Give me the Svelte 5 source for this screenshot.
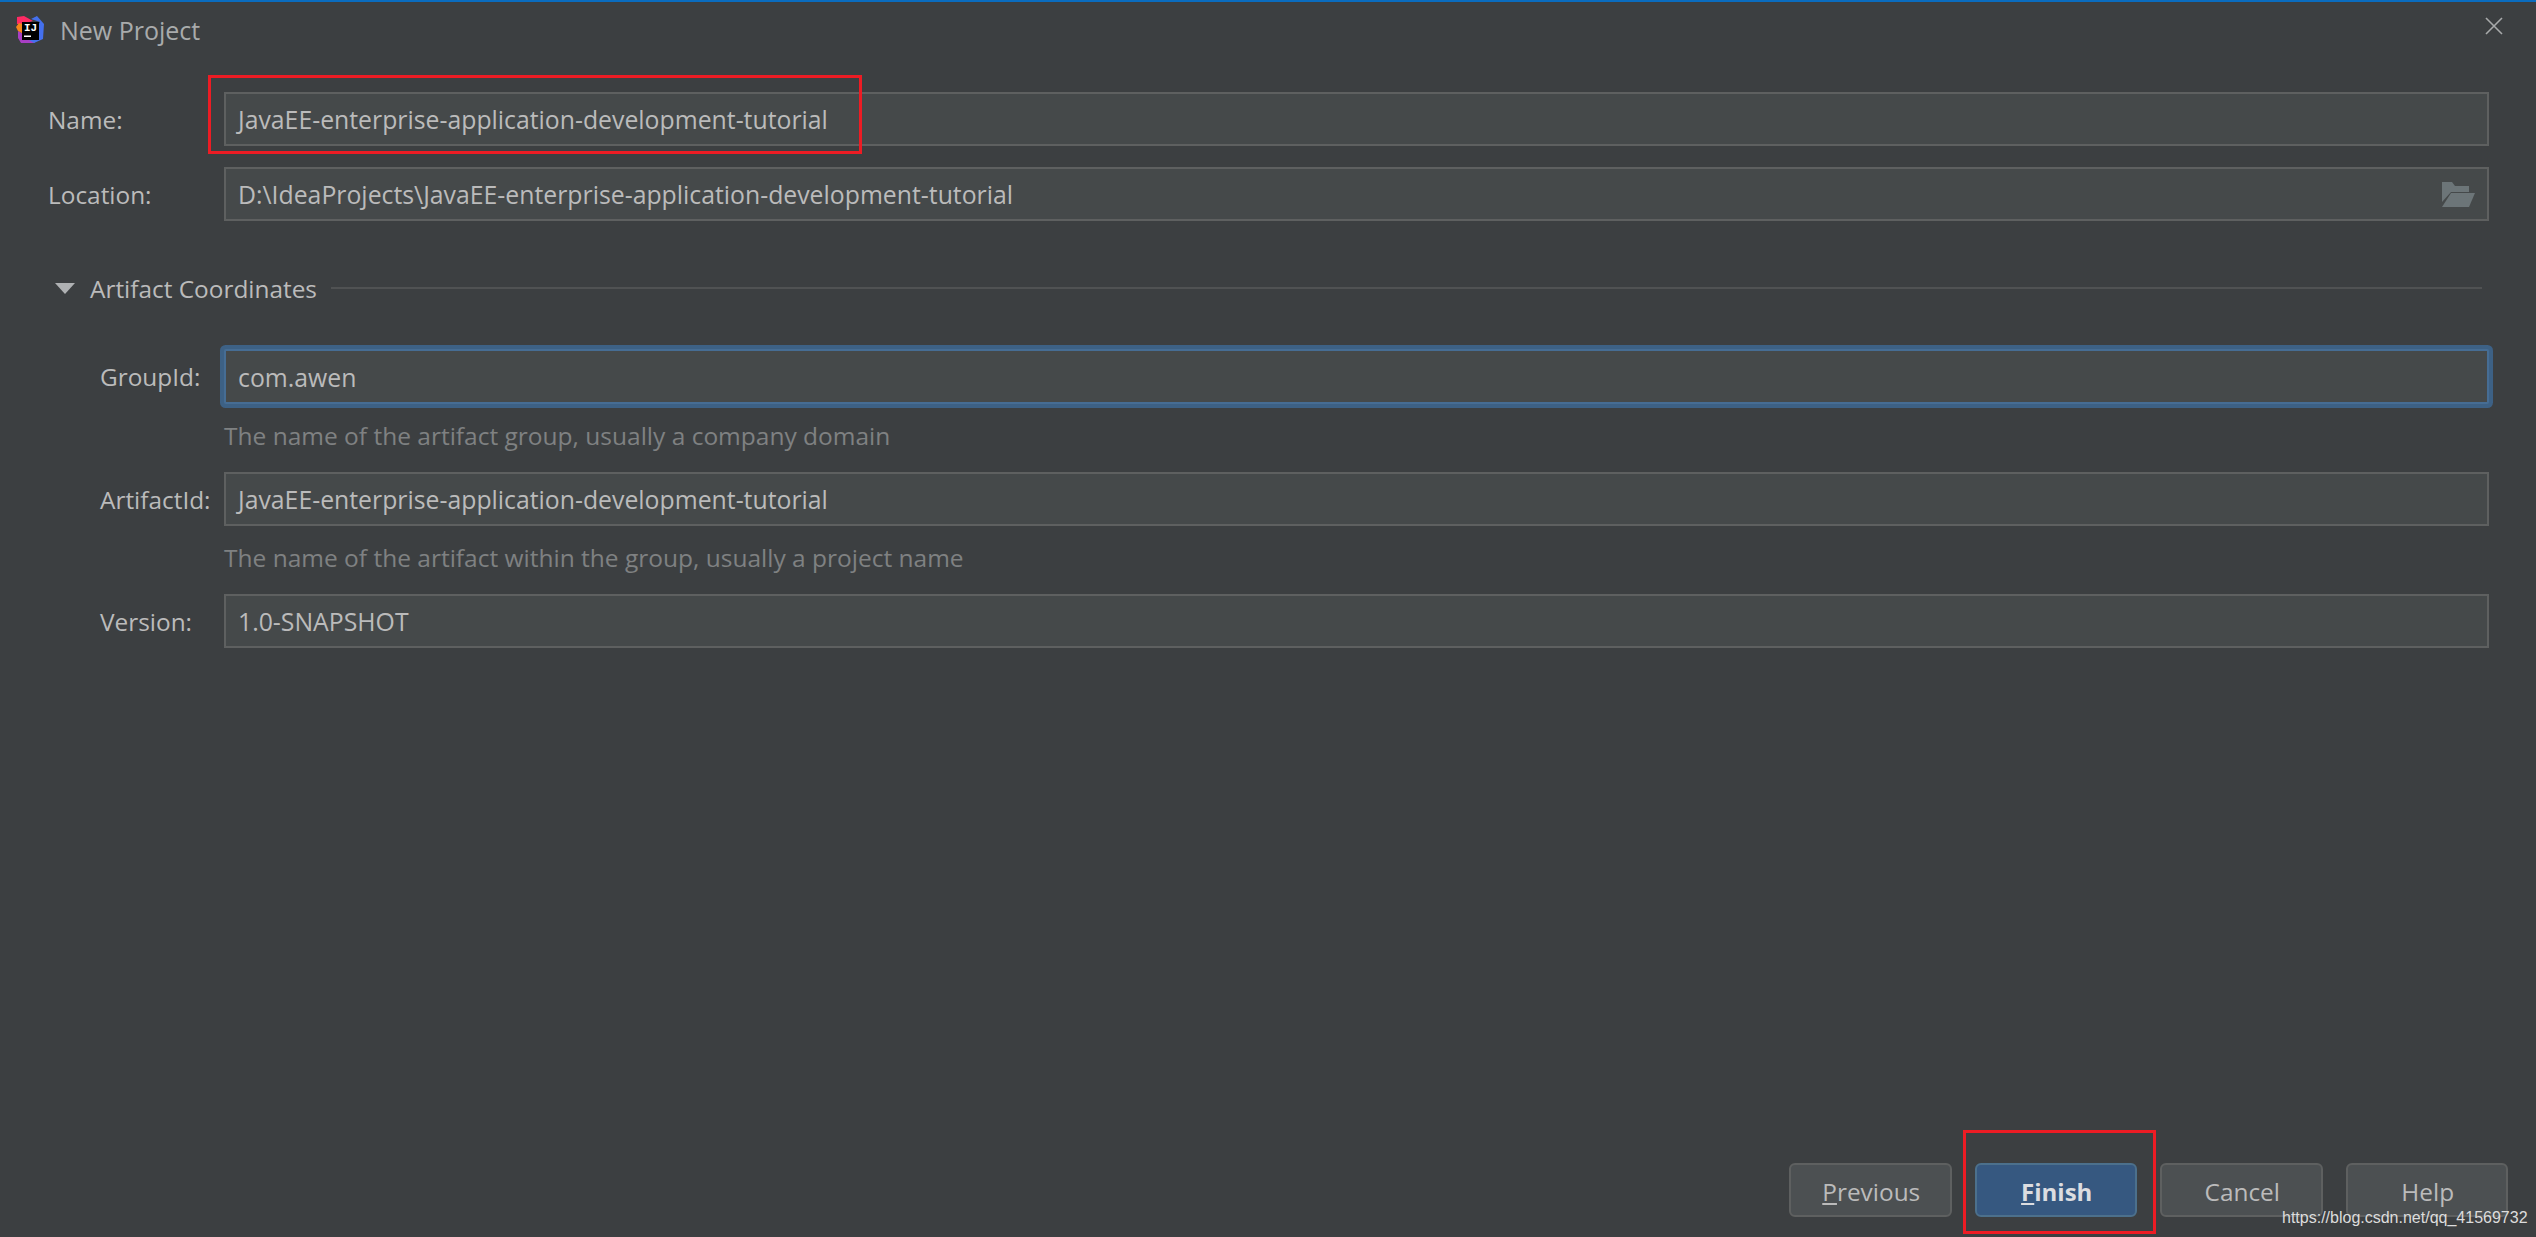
<script>
  // Form values for the wizard page
  const name = 'JavaEE-enterprise-application-development-tutorial';
  const location = 'D:\\IdeaProjects\\JavaEE-enterprise-application-development-tutorial';
</script>

<main class="dialog">
  <header class="titlebar">
    <svg class="logo" width="30" height="32" viewBox="0 0 30 32">
      <polygon points="3,3 10,2 19,7 8,10 3,10" fill="#fe2a64" />
      <polygon points="2,13 5,9 9,10 9,20 4,17" fill="#f7851a" />
      <polygon points="4,17 9,20 24,26 20,29 7,29 4,24" fill="#a93fc4" />
      <polygon points="17,5 23,2 30,10 29,25 20,29 15,26 26,8" fill="#4470ee" />
      <rect x="8" y="8" width="17" height="18" fill="#000" />
      <text x="10" y="17" class="logo-text">IJ</text>
      <rect x="10" y="21.5" width="7" height="1.5" fill="#fff" />
    </svg>
    <span class="title">New Project</span>
    <svg class="close" width="18" height="18" viewBox="0 0 18 18">
      <path d="M1 1L17 17M17 1L1 17" stroke="#a8aaab" stroke-width="1.6" fill="none" />
    </svg>
  </header>

  <section class="top">
    <div class="row">
      <label class="label">Name:</label>
      <div class="field">{name}</div>
    </div>
    <div class="row">
      <label class="label">Location:</label>
      <div class="field">
        {location}
        <svg class="folder" width="33" height="26" viewBox="0 0 33 26">
          <path d="M0 0H10L13 4H27V10H9L0 20Z" fill="#6c7578" />
          <path d="M9 11H33L27 25H0Z" fill="#6c7578" />
        </svg>
      </div>
    </div>
  </section>

  <div class="group">
    <span class="arrow"></span>
    <span class="group-title">Artifact Coordinates</span>
    <span class="rule"></span>
  </div>

  <section class="coords">
    <div class="row tall">
      <label class="label">GroupId:</label>
      <div class="field focused">com.awen</div>
    </div>
    <div class="hint">The name of the artifact group, usually a company domain</div>
    <div class="row">
      <label class="label">ArtifactId:</label>
      <div class="field">{name}</div>
    </div>
    <div class="hint">The name of the artifact within the group, usually a project name</div>
    <div class="row">
      <label class="label">Version:</label>
      <div class="field">1.0-SNAPSHOT</div>
    </div>
  </section>

  <footer class="buttons">
    <button><u>P</u>revious</button>
    <button class="primary"><u>F</u>inish</button>
    <button>Cancel</button>
    <button>Help</button>
  </footer>

  <div class="mark mark-name"></div>
  <div class="mark mark-finish"></div>
  <div class="watermark">https://blog.csdn.net/qq_41569732</div>
</main>

<style>
  :global(body) {
    margin: 0;
    background: #3c3f41;
  }

  .dialog {
    position: relative;
    box-sizing: border-box;
    width: 2536px;
    height: 1237px;
    display: flex;
    flex-direction: column;
    overflow: hidden;
    background: #3c3f41;
    border-top: 2px solid #0a6cbf;
    color: #bbbbbb;
    font-family: "Open Sans", sans-serif;
    font-size: 24.4px;
  }

  .titlebar {
    height: 56px;
    display: flex;
    align-items: center;
    padding: 0 33px 0 14px;
  }

  .logo {
    margin-right: 16px;
  }

  .logo-text {
    font-family: "Liberation Mono", monospace;
    font-size: 11px;
    font-weight: 700;
    fill: #fff;
  }

  .title {
    flex: 1;
    color: #a9abac;
    font-size: 25px;
  }

  .close {
    margin-bottom: 8px;
  }

  .top {
    margin-top: 34px;
    padding: 0 47px 0 48px;
    display: flex;
    flex-direction: column;
    gap: 21px;
  }

  .row {
    display: flex;
    height: 54px;
    align-items: center;
  }

  .tall {
    height: 55px;
  }

  .top .label {
    width: 176px;
  }

  .coords {
    margin-top: 34px;
    padding: 0 47px 0 100px;
    display: flex;
    flex-direction: column;
  }

  .coords .label {
    width: 124px;
  }

  .field {
    flex: 1;
    box-sizing: border-box;
    height: 100%;
    display: flex;
    align-items: center;
    justify-content: space-between;
    padding: 0 12px;
    background: #45494a;
    border: 2px solid #5e6060;
    font-size: 24.8px;
  }

  .focused {
    border-color: #466d94;
    box-shadow: 0 0 0 4px #3d6185;
    border-radius: 2px;
  }

  .folder {
    margin-top: 2px;
  }

  .group {
    margin-top: 40px;
    height: 54px;
    display: flex;
    align-items: center;
    padding: 0 54px 0 55px;
  }

  .arrow {
    width: 0;
    height: 0;
    border-left: 10px solid transparent;
    border-right: 10px solid transparent;
    border-top: 11px solid #afb1b3;
    margin-right: 15px;
  }

  .group-title {
    margin-right: 14px;
  }

  .rule {
    flex: 1;
    height: 2px;
    background: #505253;
  }

  .hint {
    height: 68px;
    box-sizing: border-box;
    padding: 0 0 6px 124px;
    display: flex;
    align-items: center;
    color: #7f8182;
    font-size: 24.5px;
  }

  .buttons {
    margin-top: auto;
    padding: 0 28px 20px 0;
    display: flex;
    justify-content: flex-end;
    gap: 23px;
  }

  button {
    width: 162.5px;
    height: 54px;
    padding: 3px 0 0 2px;
    box-sizing: border-box;
    font: inherit;
    color: #bbbbbb;
    background: #4c5052;
    border: 2px solid #5e6060;
    border-radius: 6px;
  }

  .primary {
    background: #365880;
    border-color: #4c708c;
    color: #dcdde0;
    font-size: 24px;
    font-weight: 700;
  }

  .mark {
    position: absolute;
    box-sizing: border-box;
    border: 3px solid #ed1c24;
  }

  .mark-name {
    left: 208px;
    top: 73px;
    width: 654px;
    height: 79px;
  }

  .mark-finish {
    left: 1963px;
    top: 1128px;
    width: 193px;
    height: 104px;
  }

  .watermark {
    position: absolute;
    left: 2282px;
    top: 1207px;
    font-family: "Liberation Sans", sans-serif;
    font-size: 16px;
    color: #dcdcdc;
  }
</style>
